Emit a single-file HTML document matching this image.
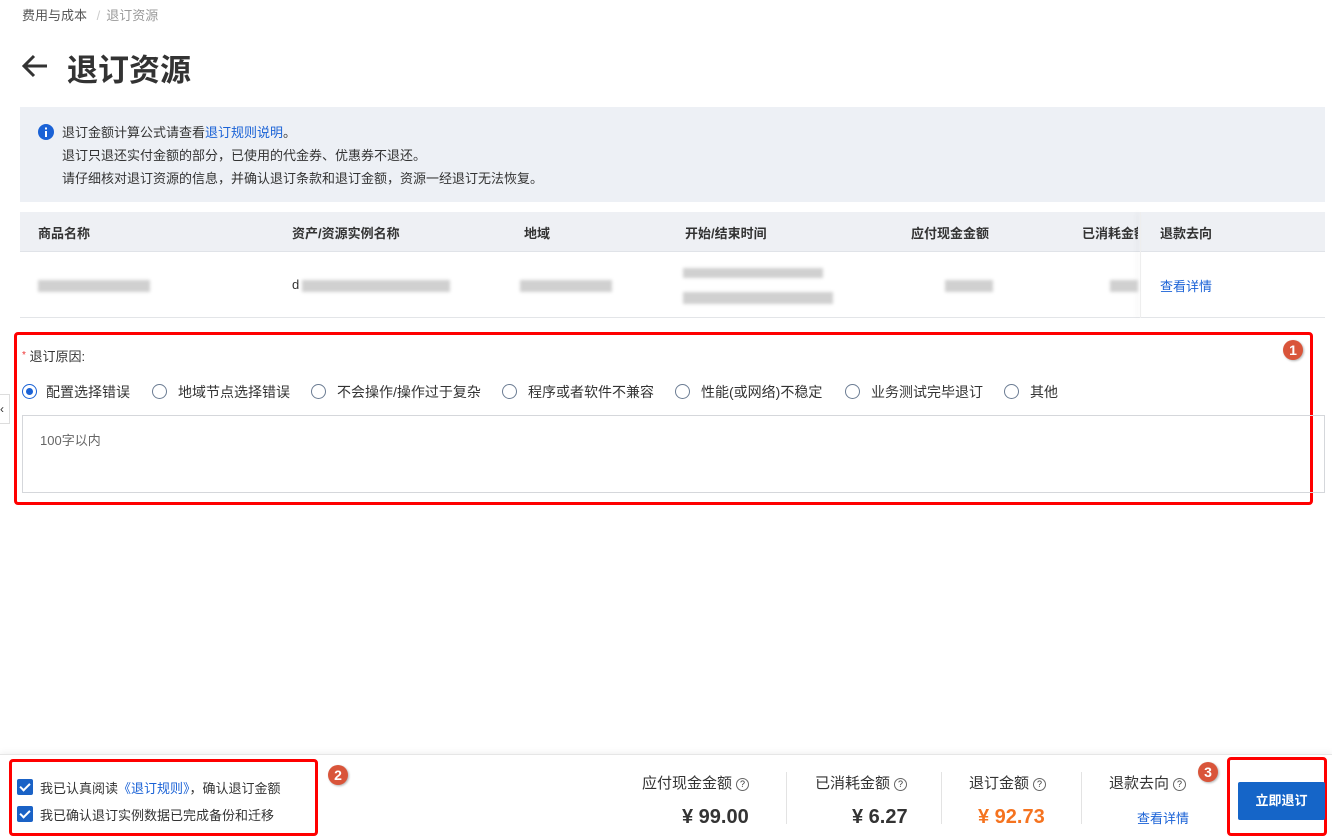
<!DOCTYPE html>
<html><head><meta charset="utf-8"><style>
*{margin:0;padding:0;box-sizing:border-box}
body{width:1332px;height:840px;overflow:hidden;background:#fff;position:relative;font-family:"Liberation Sans","Noto Sans CJK SC",sans-serif;color:#333;font-size:13px}
.a{position:absolute;white-space:nowrap}
.blur{position:absolute;background:#c8c8c8;filter:blur(1.5px);opacity:.85}
.radio{position:absolute;top:384px;width:15px;height:15px;border:1px solid #6b7c93;border-radius:50%}
.rl{position:absolute;top:382px;font-size:14px;color:#333}
.badge{position:absolute;width:20px;height:20px;border-radius:50%;background:#d9553a;color:#fff;font-weight:bold;font-size:14px;text-align:center;line-height:20px;box-shadow:1px 1px 2px rgba(0,0,0,.3)}
.red{position:absolute;border:3px solid #f00;border-radius:4px}
.lab{position:absolute;top:772px;font-size:15px;color:#333}
.q{display:inline-block;width:13px;height:13px;border:1px solid #666;border-radius:50%;font-size:9px;line-height:11px;text-align:center;vertical-align:1px;margin-left:4px}
.val{position:absolute;top:806px;font-size:20px;font-weight:bold;color:#333}
.div{position:absolute;top:772px;width:1px;height:52px;background:#e3e3e3}
.cb{position:absolute;left:17px;width:16px;height:16px;background:#1a62c6;border-radius:2px}
.cb:after{content:"";position:absolute;left:5px;top:2px;width:4px;height:8px;border:solid #fff;border-width:0 2px 2px 0;transform:rotate(45deg)}
</style></head><body>
<div class="a" style="left:22px;top:5px;font-size:13px;color:#555">费用与成本 <span style="color:#ccc;margin:0 6px">/</span><span style="color:#999">退订资源</span></div>
<svg class="a" style="left:21px;top:54px" width="28" height="24" viewBox="0 0 28 24"><path d="M26 12H3M13 2L3 12l10 10" fill="none" stroke="#333" stroke-width="3"/></svg>
<div class="a" style="left:67px;top:45px;font-size:31px;font-weight:bold;color:#333">退订资源</div>

<div class="a" style="left:20px;top:107px;width:1305px;height:95px;background:#edf0f5"></div>
<svg class="a" style="left:38px;top:124px" width="16" height="16"><circle cx="8" cy="8" r="8" fill="#1a62d6"/><rect x="7" y="7" width="2" height="6" fill="#fff"/><rect x="7" y="3.5" width="2" height="2" fill="#fff"/></svg>
<div class="a" style="left:62px;top:121px;line-height:23px;font-size:13px;color:#333">退订金额计算公式请查看<span style="color:#1a62d6">退订规则说明</span>。<br>退订只退还实付金额的部分，已使用的代金券、优惠券不退还。<br>请仔细核对退订资源的信息，并确认退订条款和退订金额，资源一经退订无法恢复。</div>

<div class="a" style="left:20px;top:212px;width:1305px;height:40px;background:#eef0f4;border-bottom:1px solid #e0e3e8"></div>
<div class="a" style="left:20px;top:317px;width:1305px;height:1px;background:#e3e5e8"></div>
<div class="a" style="left:1140px;top:212px;width:1px;height:106px;box-shadow:-3px 0 5px rgba(0,0,0,.1);background:#eee"></div>
<div class="a" style="top:223px;left:38px;font-weight:bold;font-size:13px">商品名称</div>
<div class="a" style="top:223px;left:292px;font-weight:bold">资产/资源实例名称</div>
<div class="a" style="top:223px;left:524px;font-weight:bold">地域</div>
<div class="a" style="top:223px;left:685px;font-weight:bold">开始/结束时间</div>
<div class="a" style="top:223px;left:911px;font-weight:bold">应付现金金额</div>
<div class="a" style="top:223px;left:1082px;font-weight:bold;width:56px;overflow:hidden">已消耗金额</div>
<div class="a" style="top:223px;left:1160px;font-weight:bold">退款去向</div>
<div class="blur" style="left:38px;top:280px;width:112px;height:12px"></div>
<div class="a" style="left:292px;top:277px">d</div>
<div class="blur" style="left:302px;top:280px;width:148px;height:12px"></div>
<div class="blur" style="left:520px;top:280px;width:92px;height:12px"></div>
<div class="blur" style="left:683px;top:268px;width:140px;height:10px"></div>
<div class="blur" style="left:683px;top:292px;width:150px;height:12px"></div>
<div class="blur" style="left:945px;top:280px;width:48px;height:12px"></div>
<div class="blur" style="left:1110px;top:280px;width:28px;height:12px"></div>
<div class="a" style="left:1160px;top:276px;color:#1a62d6">查看详情</div>

<div class="red" style="left:14px;top:332px;width:1299px;height:173px"></div>
<div class="badge" style="left:1283px;top:340px">1</div>
<div class="a" style="left:22px;top:346px;font-size:13px"><span style="color:#e33;font-size:10px;vertical-align:3px">*</span> 退订原因:</div>
<div class="a" style="left:0;top:394px;width:10px;height:30px;border:1px solid #ddd;border-left:none;background:#fff;font-size:12px;line-height:28px">‹</div>
<div class="radio" style="left:22px;border-color:#1a62d6"><div style="position:absolute;left:3px;top:3px;width:7px;height:7px;border-radius:50%;background:#1a62d6"></div></div>
<div class="rl" style="left:46px">配置选择错误</div>
<div class="radio" style="left:152px"></div><div class="rl" style="left:178px">地域节点选择错误</div>
<div class="radio" style="left:311px"></div><div class="rl" style="left:337px">不会操作/操作过于复杂</div>
<div class="radio" style="left:502px"></div><div class="rl" style="left:528px">程序或者软件不兼容</div>
<div class="radio" style="left:675px"></div><div class="rl" style="left:701px">性能(或网络)不稳定</div>
<div class="radio" style="left:845px"></div><div class="rl" style="left:871px">业务测试完毕退订</div>
<div class="radio" style="left:1004px"></div><div class="rl" style="left:1030px">其他</div>
<div class="a" style="left:22px;top:415px;width:1303px;height:78px;border:1px solid #d5d7db"></div>
<div class="a" style="left:40px;top:430px;color:#666">100字以内</div>

<div class="a" style="left:0;top:754px;width:1332px;height:86px;border-top:1px solid #e6e6e6;box-shadow:0 -2px 6px rgba(0,0,0,.05)"></div>
<div class="red" style="left:9px;top:759px;width:309px;height:77px"></div>
<div class="badge" style="left:328px;top:765px">2</div>
<div class="cb" style="top:779px"></div>
<div class="a" style="left:40px;top:778px">我已认真阅读<span style="color:#1a62d6">《退订规则》</span>，确认退订金额</div>
<div class="cb" style="top:806px"></div>
<div class="a" style="left:40px;top:805px">我已确认退订实例数据已完成备份和迁移</div>
<div class="lab" style="left:642px">应付现金金额<span class="q">?</span></div>
<div class="val" style="left:682px">¥ 99.00</div>
<div class="div" style="left:786px"></div>
<div class="lab" style="left:815px">已消耗金额<span class="q">?</span></div>
<div class="val" style="left:852px">¥ 6.27</div>
<div class="div" style="left:941px"></div>
<div class="lab" style="left:969px">退订金额<span class="q">?</span></div>
<div class="val" style="left:978px;color:#f5731f">¥ 92.73</div>
<div class="div" style="left:1081px"></div>
<div class="lab" style="left:1109px">退款去向<span class="q">?</span></div>
<div class="a" style="left:1137px;top:808px;color:#1a62d6">查看详情</div>
<div class="badge" style="left:1198px;top:762px">3</div>
<div class="red" style="left:1227px;top:757px;width:100px;height:79px"></div>
<div class="a" style="left:1238px;top:782px;width:87px;height:38px;background:#1565c8;color:#fff;font-weight:bold;text-align:center;line-height:38px;border-radius:2px">立即退订</div>
</body></html>
